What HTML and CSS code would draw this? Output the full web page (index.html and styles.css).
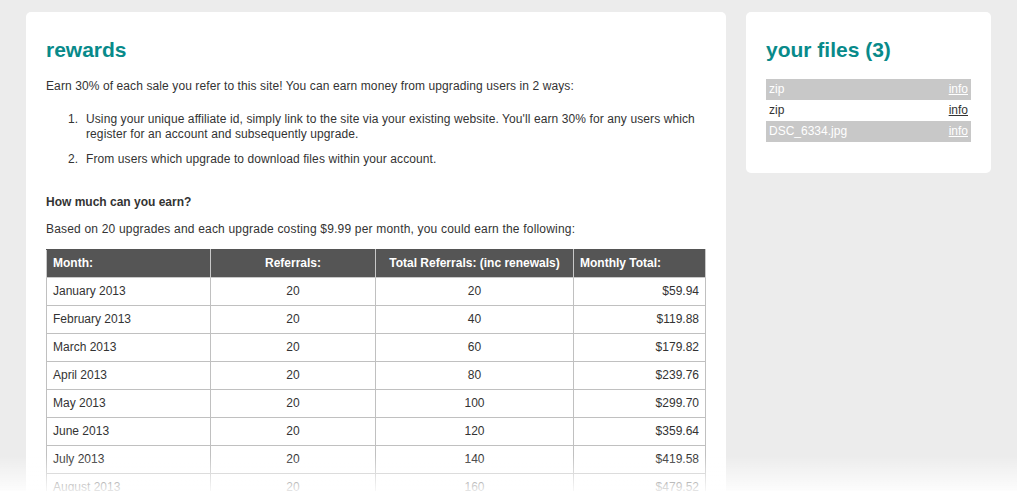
FILE: index.html
```html
<!DOCTYPE html>
<html>
<head>
<meta charset="utf-8">
<title>rewards</title>
<link rel="stylesheet" href="styles.css">
</head>
<body>
<div class="page">
  <main class="card main">
    <h2 class="title">rewards</h2>
    <p class="intro">Earn 30% of each sale you refer to this site! You can earn money from upgrading users in 2 ways:</p>
    <ol class="ways">
      <li>Using your unique affiliate id, simply link to the site via your existing website. You'll earn 30% for any users which register for an account and subsequently upgrade.</li>
      <li>From users which upgrade to download files within your account.</li>
    </ol>
    <h3 class="sub">How much can you earn?</h3>
    <p class="based">Based on 20 upgrades and each upgrade costing $9.99 per month, you could earn the following:</p>
    <table class="earn">
      <colgroup>
        <col class="c1"><col class="c2"><col class="c3"><col class="c4">
      </colgroup>
      <thead>
        <tr><th class="l">Month:</th><th>Referrals:</th><th>Total Referrals: (inc renewals)</th><th class="l">Monthly Total:</th></tr>
      </thead>
      <tbody>
        <tr><td class="l">January 2013</td><td>20</td><td>20</td><td class="r">$59.94</td></tr>
        <tr><td class="l">February 2013</td><td>20</td><td>40</td><td class="r">$119.88</td></tr>
        <tr><td class="l">March 2013</td><td>20</td><td>60</td><td class="r">$179.82</td></tr>
        <tr><td class="l">April 2013</td><td>20</td><td>80</td><td class="r">$239.76</td></tr>
        <tr><td class="l">May 2013</td><td>20</td><td>100</td><td class="r">$299.70</td></tr>
        <tr><td class="l">June 2013</td><td>20</td><td>120</td><td class="r">$359.64</td></tr>
        <tr><td class="l">July 2013</td><td>20</td><td>140</td><td class="r">$419.58</td></tr>
        <tr><td class="l">August 2013</td><td>20</td><td>160</td><td class="r">$479.52</td></tr>
        <tr><td class="l">September 2013</td><td>20</td><td>180</td><td class="r">$539.46</td></tr>
        <tr><td class="l">October 2013</td><td>20</td><td>200</td><td class="r">$599.40</td></tr>
        <tr><td class="l">November 2013</td><td>20</td><td>220</td><td class="r">$659.34</td></tr>
        <tr><td class="l">December 2013</td><td>20</td><td>240</td><td class="r">$719.28</td></tr>
      </tbody>
    </table>
  </main>
  <aside class="card side">
    <h2 class="title">your files (3)</h2>
    <ul class="files">
      <li class="file alt"><span class="name">zip</span><a href="#" class="info">info</a></li>
      <li class="file"><span class="name">zip</span><a href="#" class="info">info</a></li>
      <li class="file alt"><span class="name">DSC_6334.jpg</span><a href="#" class="info">info</a></li>
    </ul>
  </aside>
</div>
<div class="fade"></div>
</body>
</html>
```
FILE: styles.css
```css
html {
  overflow: hidden;
}
body {
  margin: 0;
  background: #ececec;
  font-family: "Liberation Sans", Arial, sans-serif;
  font-size: 12px;
  line-height: 15px;
  color: #333;
}
.page {
  display: flex;
  align-items: flex-start;
  gap: 20px;
  padding: 12px 0 0 26px;
}
.card {
  background: #fff;
  border-radius: 5px;
}
.main {
  width: 660px;
  padding: 20px 20px 40px 20px;
}
.side {
  width: 205px;
  padding: 20px 20px 31px 20px;
}
.title {
  margin: 5px 0 16px 0;
  font-size: 21px;
  line-height: 26px;
  font-weight: bold;
  color: #088a8a;
}
.intro {
  margin: 0;
  letter-spacing: 0.1px;
}
.ways {
  margin: 18px 0 0 0;
  padding-left: 40px;
  list-style: none;
  counter-reset: way;
  letter-spacing: 0.1px;
}
.ways li {
  margin-bottom: 10px;
  counter-increment: way;
}
.ways li::before {
  content: counter(way) ".";
  display: inline-block;
  width: 18px;
  margin-left: -18px;
  letter-spacing: 0;
}
.ways li:last-child {
  margin-bottom: 0;
}
.sub {
  margin: 28px 0 12px 0;
  font-size: 12px;
  line-height: 15px;
  font-weight: bold;
}
.based {
  margin: 0 0 12px 0;
  letter-spacing: 0.19px;
}
.earn {
  width: 659px;
  border-collapse: collapse;
  table-layout: fixed;
}
.c1 { width: 164px; }
.c2 { width: 165px; }
.c3 { width: 198px; }
.c4 { width: 132px; }
.earn th,
.earn td {
  border: 1px solid #c0c0c0;
  height: 27px;
  padding: 0 6px;
  text-align: center;
  vertical-align: middle;
}
.earn th {
  background: #555;
  color: #fff;
  font-weight: bold;
  border-color: #c8c8c8;
  border-top-color: #555;
}
.earn .l { text-align: left; }
.earn .r { text-align: right; }
.files {
  list-style: none;
  margin: 0;
  padding: 0;
}
.file {
  display: flex;
  justify-content: space-between;
  height: 21px;
  align-items: center;
  padding: 0 3px;
  color: #333;
}
.file.alt {
  background: #c8c8c8;
  color: #fff;
}
.info {
  color: #333;
  text-decoration: underline;
}
.file.alt .info {
  color: #fff;
}
.fade {
  position: fixed;
  left: 0;
  right: 0;
  bottom: 0;
  height: 36px;
  background: linear-gradient(to bottom, rgba(255,255,255,0), rgba(255,255,255,0.88));
  pointer-events: none;
}
```
